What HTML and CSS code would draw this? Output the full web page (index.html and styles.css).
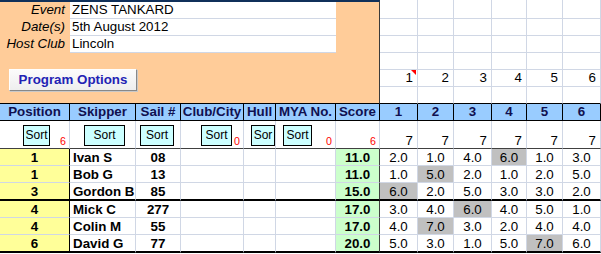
FILE: index.html
```html
<!DOCTYPE html>
<html>
<head>
<meta charset="utf-8">
<link rel="stylesheet" href="styles.css">
</head>
<body>
<div class="sheet">
  <div class="panel">
    <div class="info">
      <div class="lbl">Event</div><div class="val">ZENS TANKARD</div>
      <div class="lbl">Date(s)</div><div class="val">5th August 2012</div>
      <div class="lbl">Host Club</div><div class="val">Lincoln</div>
    </div>
    <div class="prog">Program Options</div>
  </div>
  <div class="rtop">
    <div class="g"></div><div class="g"></div><div class="g"></div><div class="g"></div><div class="g"></div><div class="g"></div>
    <div class="g"></div><div class="g"></div><div class="g"></div><div class="g"></div><div class="g"></div><div class="g"></div>
    <div class="g"></div><div class="g"></div><div class="g"></div><div class="g"></div><div class="g"></div><div class="g"></div>
    <div class="g"></div><div class="g"></div><div class="g"></div><div class="g"></div><div class="g"></div><div class="g"></div>
    <div class="g n"><span class="note"></span>1</div><div class="g n">2</div><div class="g n">3</div><div class="g n">4</div><div class="g n">5</div><div class="g n">6</div>
    <div class="g last"></div><div class="g last"></div><div class="g last"></div><div class="g last"></div><div class="g last"></div><div class="g last"></div>
  </div>

  <div class="h">Position</div><div class="h">Skipper</div><div class="h">Sail #</div><div class="h">Club/City</div><div class="h">Hull</div><div class="h">MYA No.</div><div class="h">Score</div>
  <div class="h">1</div><div class="h">2</div><div class="h">3</div><div class="h">4</div><div class="h">5</div><div class="h">6</div>

  <div class="s"><span class="btn b-pos">Sort</span><span class="cnt">6</span></div>
  <div class="s"><span class="btn b-skip">Sort</span></div>
  <div class="s"><span class="btn b-sail">Sort</span></div>
  <div class="s"><span class="btn b-club">Sort</span><span class="cnt">0</span></div>
  <div class="s"><span class="btn b-hull">Sor</span></div>
  <div class="s"><span class="btn b-mya">Sort</span><span class="cnt">0</span></div>
  <div class="s"><span class="cnt">6</span></div>
  <div class="s"><span class="seven">7</span></div>
  <div class="s"><span class="seven">7</span></div>
  <div class="s"><span class="seven">7</span></div>
  <div class="s"><span class="seven">7</span></div>
  <div class="s"><span class="seven">7</span></div>
  <div class="s"><span class="seven">7</span></div>

  <div class="c pos">1</div><div class="c name">Ivan S</div><div class="c sail">08</div><div class="c"></div><div class="c"></div><div class="c"></div><div class="c score">11.0</div>
  <div class="c r">2.0</div><div class="c r">1.0</div><div class="c r">4.0</div><div class="c r drop">6.0</div><div class="c r">1.0</div><div class="c r">3.0</div>

  <div class="c pos">1</div><div class="c name">Bob G</div><div class="c sail">13</div><div class="c"></div><div class="c"></div><div class="c"></div><div class="c score">11.0</div>
  <div class="c r">1.0</div><div class="c r drop">5.0</div><div class="c r">2.0</div><div class="c r">1.0</div><div class="c r">2.0</div><div class="c r">5.0</div>

  <div class="c pos thick">3</div><div class="c name thick">Gordon B</div><div class="c sail thick">85</div><div class="c thick"></div><div class="c thick"></div><div class="c thick"></div><div class="c score thick">15.0</div>
  <div class="c r thick drop">6.0</div><div class="c r thick">2.0</div><div class="c r thick">5.0</div><div class="c r thick">3.0</div><div class="c r thick">3.0</div><div class="c r thick">2.0</div>

  <div class="c pos">4</div><div class="c name">Mick C</div><div class="c sail">277</div><div class="c"></div><div class="c"></div><div class="c"></div><div class="c score">17.0</div>
  <div class="c r">3.0</div><div class="c r">4.0</div><div class="c r drop">6.0</div><div class="c r">4.0</div><div class="c r">5.0</div><div class="c r">1.0</div>

  <div class="c pos">4</div><div class="c name">Colin M</div><div class="c sail">55</div><div class="c"></div><div class="c"></div><div class="c"></div><div class="c score">17.0</div>
  <div class="c r">4.0</div><div class="c r drop">7.0</div><div class="c r">3.0</div><div class="c r">2.0</div><div class="c r">4.0</div><div class="c r">4.0</div>

  <div class="c pos thick">6</div><div class="c name thick">David G</div><div class="c sail thick">77</div><div class="c thick"></div><div class="c thick"></div><div class="c thick"></div><div class="c score thick">20.0</div>
  <div class="c r thick">5.0</div><div class="c r thick">3.0</div><div class="c r thick">1.0</div><div class="c r thick">5.0</div><div class="c r thick drop">7.0</div><div class="c r thick">6.0</div>
</div>
</body>
</html>
```

FILE: styles.css
```css
html, body {
  margin: 0;
  padding: 0;
  background: #ffffff;
  overflow: hidden;
}

body {
  font-family: "Liberation Sans", Arial, sans-serif;
  font-size: 13.33px;
  color: #000000;
}

.sheet {
  display: grid;
  grid-template-columns: 70px 66px 45px 63px 32px 60px 44px 38px 36px 38px 35px 36px 38px;
  width: 601px;
}

/* ---------- top panel ---------- */
.panel {
  grid-column: 1 / 8;
  height: 104px;
  box-sizing: border-box;
  background: #ffcc99;
  border-top: 2px solid #10305a;
  border-right: 1px solid #3a3a3a;
  border-bottom: 1px solid #000000;
}

.info {
  display: grid;
  grid-template-columns: 70px 266px;
  grid-auto-rows: 17px;
}

.lbl {
  font-style: italic;
  text-align: right;
  padding-right: 5px;
  line-height: 16px;
}

.val {
  background: #ffffff;
  border-bottom: 1px solid #d0d7e5;
  padding-left: 2px;
  line-height: 16px;
}

.prog {
  margin: 16px 0 0 9px;
  width: 128px;
  height: 22px;
  box-sizing: border-box;
  background: linear-gradient(#fbfbfb, #eeeeee);
  border: 1px solid #ffffff;
  border-right-color: #888888;
  border-bottom-color: #888888;
  box-shadow: 1px 1px 0 #c8c8c8;
  color: #2222b4;
  font-weight: bold;
  text-align: center;
  line-height: 19px;
}

/* ---------- top right grid ---------- */
.rtop {
  grid-column: 8 / 14;
  display: grid;
  grid-template-columns: 38px 36px 38px 35px 36px 38px;
  grid-template-rows: 19px 17px 17px 17px 17px 17px;
}

.g {
  box-sizing: border-box;
  border-right: 1px solid #d0d7e5;
  border-bottom: 1px solid #d0d7e5;
}

.g.last {
  border-bottom-color: #000000;
}

.n {
  position: relative;
  text-align: right;
  padding-right: 4px;
  line-height: 16px;
}

.note {
  position: absolute;
  top: 0;
  right: 1px;
  width: 0;
  height: 0;
  border-top: 5px solid #ff0000;
  border-left: 5px solid transparent;
}

/* ---------- header row ---------- */
.h {
  height: 17px;
  box-sizing: border-box;
  background: #99ccff;
  border-right: 1px solid #000000;
  border-bottom: 1px solid #000000;
  font-weight: bold;
  color: #101050;
  text-align: center;
  line-height: 16px;
  white-space: nowrap;
  overflow: hidden;
}

/* ---------- sort row ---------- */
.s {
  height: 28px;
  box-sizing: border-box;
  border-right: 1px solid #d0d7e5;
  border-bottom: 1px solid #404040;
  display: flex;
  align-items: flex-end;
}

.btn {
  align-self: flex-start;
  margin-top: 4px;
  height: 21px;
  box-sizing: border-box;
  background: #ccffff;
  border: 1px solid #000000;
  font-size: 12px;
  line-height: 19px;
  text-align: center;
  overflow: hidden;
  white-space: nowrap;
}

.b-pos { margin-left: 23px; width: 27px; }
.b-skip { margin-left: 14px; width: 41px; }
.b-sail { margin-left: 4px; width: 34px; }
.b-club { margin-left: 20px; width: 31px; }
.b-hull { margin-left: 7px; width: 25px; }
.b-mya { margin-left: 7px; width: 29px; }

.cnt {
  margin-left: auto;
  padding-right: 3px;
  color: #ff0000;
  font-size: 10.67px;
  line-height: 13px;
}

.seven {
  margin-left: auto;
  padding-right: 4px;
  line-height: 15px;
}

/* ---------- data rows ---------- */
.c {
  height: 17px;
  box-sizing: border-box;
  border-right: 1px solid #d0d7e5;
  border-bottom: 1px solid #d0d7e5;
  padding-top: 1px;
  line-height: 15px;
  white-space: nowrap;
}

.c.thick {
  height: 18px;
  border-bottom: 2px solid #000000;
}

.pos {
  background: #ffff99;
  border-right-color: #000000;
  font-weight: bold;
  text-align: center;
}

.name {
  font-weight: bold;
  padding-left: 3px;
}

.sail {
  font-weight: bold;
  text-align: center;
}

.score {
  background: #ccffcc;
  border-right-color: #404040;
  font-weight: bold;
  text-align: center;
}

.r {
  text-align: center;
}

.drop {
  background: #c0c0c0;
}
```
